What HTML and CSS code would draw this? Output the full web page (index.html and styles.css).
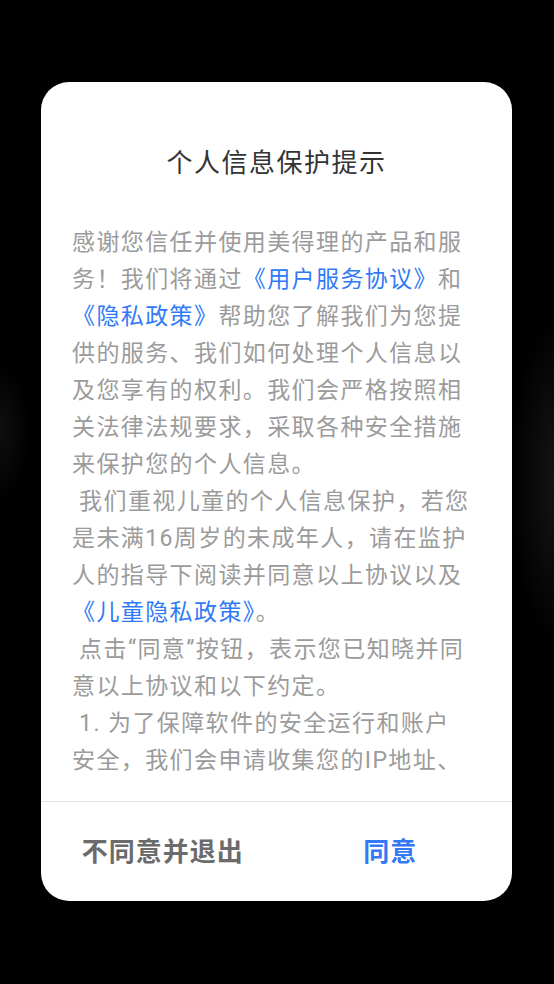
FILE: index.html
```html
<!DOCTYPE html>
<html lang="zh-CN">
<head>
<meta charset="utf-8">
<title>个人信息保护提示</title>
<link rel="stylesheet" href="styles.css">
</head>
<body>
<div class="screen">
  <div class="dialog">
    <h1 class="title">个人信息保护提示</h1>
    <div class="content">
      <p class="text">感谢您信任并使用美得理的产品和服务！我们将通过<a class="link">《用户服务协议》</a>和<a class="link">《隐私政策》</a>帮助您了解我们为您提供的服务、我们如何处理个人信息以及您享有的权利。我们会严格按照相关法律法规要求，采取各种安全措施来保护您的个人信息。<br>&nbsp;我们重视儿童的个人信息保护，若您是未满16周岁的未成年人，请在监护人的指导下阅读并同意以上协议以及<a class="link">《儿童隐私政策》</a>。<br>&nbsp;点击“同意”按钮，表示您已知晓并同意以上协议和以下约定。<br>&nbsp;1. 为了保障软件的安全运行和账户<br>安全，我们会申请收集您的IP地址、</p>
    </div>
    <div class="footer">
      <button class="btn btn-cancel">不同意并退出</button>
      <button class="btn btn-ok">同意</button>
    </div>
  </div>
</div>
</body>
</html>
```

FILE: styles.css
```css
html, body {
  margin: 0;
  padding: 0;
}
body {
  width: 554px;
  height: 984px;
  overflow: hidden;
  background-color: #000;
  background-image:
    radial-gradient(ellipse 50px 170px at 560px 480px, rgba(28,28,28,0.8), rgba(0,0,0,0) 100%),
    radial-gradient(ellipse 30px 70px at 0px 430px, rgba(22,22,22,0.7), rgba(0,0,0,0) 100%);
  font-family: Roboto, "Noto Sans CJK SC", sans-serif;
}
.screen {
  box-sizing: border-box;
  width: 554px;
  height: 984px;
  padding: 82px 42px 0 41px;
}
.dialog {
  box-sizing: border-box;
  height: 819px;
  background: #fff;
  border-radius: 28px;
  display: flex;
  flex-direction: column;
  overflow: hidden;
}
.title {
  margin: 0;
  padding-top: 61px;
  line-height: 40px;
  font-size: 26px;
  font-weight: 400;
  letter-spacing: 1.5px;
  color: #333;
  text-align: center;
}
.content {
  flex: none;
  height: 555px;
  margin-top: 41px;
  padding: 0 31px;
  overflow: hidden;
}
.text {
  margin: 0;
  font-size: 23px;
  line-height: 37px;
  letter-spacing: 1.4px;
  color: #9b9b9b;
}
.link {
  color: #2f7af5;
  text-decoration: none;
}
.footer {
  margin-top: auto;
  box-sizing: border-box;
  height: 100px;
  border-top: 1px solid #e4e4e4;
  padding: 0 8px;
  display: flex;
  align-items: center;
}
.btn {
  flex: 1;
  border: 0;
  background: none;
  padding: 0;
  font-family: Roboto, "Noto Sans CJK SC", sans-serif;
  font-size: 26px;
  font-weight: 700;
  letter-spacing: 1px;
  line-height: 40px;
  text-align: center;
}
.btn-cancel {
  color: #6b6b6b;
}
.btn-ok {
  color: #3478f6;
}
```
